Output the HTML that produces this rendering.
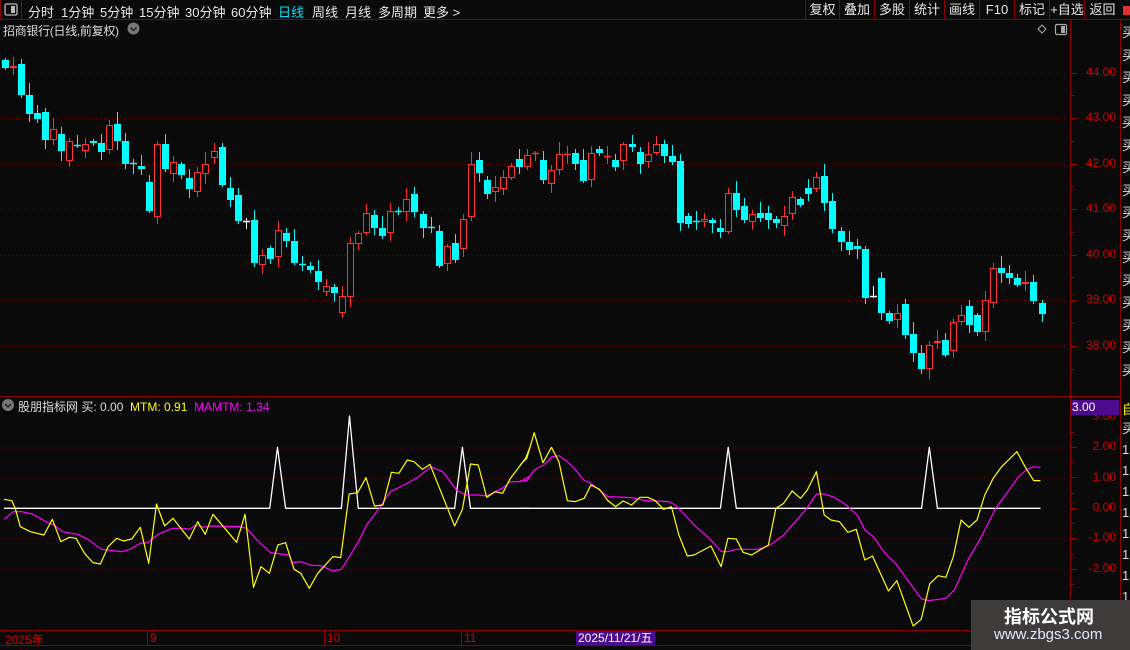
<!DOCTYPE html>
<html><head><meta charset="utf-8"><style>
*{margin:0;padding:0;box-sizing:border-box}
body{width:1130px;height:650px;background:#0a0a0a;overflow:hidden;position:relative;font-family:"Liberation Sans","Noto Sans CJK SC",sans-serif;color:#e6e6e6}
.a{position:absolute;white-space:nowrap}
.tb{font-size:13px;top:2px;color:#e8e8e8}
.rb{position:absolute;top:0;height:19px;font-size:13px;line-height:19px;text-align:center;color:#e8e8e8}
.pl{position:absolute;right:14px;font-size:12px;color:#d00000;font-family:"Liberation Sans",sans-serif}
.ax{position:absolute;font-size:12px;color:#d00000;top:631px}
</style></head><body>
<svg class="a" style="left:0;top:0" width="1130" height="650" xmlns="http://www.w3.org/2000/svg">
<g stroke="#8b0000" stroke-width="1" fill="none">
<line x1="0" y1="19.5" x2="1130" y2="19.5"/>
<line x1="21.5" y1="0" x2="21.5" y2="19"/>
<line x1="0.5" y1="0" x2="0.5" y2="19"/>
<line x1="1070.5" y1="19" x2="1070.5" y2="650"/>
<line x1="1120.5" y1="19" x2="1120.5" y2="650"/>
<line x1="0" y1="396.5" x2="1120" y2="396.5"/>
<line x1="0" y1="630.5" x2="1130" y2="630.5"/>
<line x1="0" y1="645.5" x2="1130" y2="645.5"/>
<line x1="805.5" y1="0" x2="805.5" y2="19"/><line x1="839.5" y1="0" x2="839.5" y2="19"/>
<line x1="874.5" y1="0" x2="874.5" y2="19"/><line x1="909.5" y1="0" x2="909.5" y2="19"/>
<line x1="944.5" y1="0" x2="944.5" y2="19"/><line x1="979.5" y1="0" x2="979.5" y2="19"/>
<line x1="1014.5" y1="0" x2="1014.5" y2="19"/><line x1="1049.5" y1="0" x2="1049.5" y2="19"/>
<line x1="1084.5" y1="0" x2="1084.5" y2="19"/>
<line x1="147.5" y1="631" x2="147.5" y2="645"/><line x1="324.5" y1="631" x2="324.5" y2="645"/>
<line x1="461.5" y1="631" x2="461.5" y2="645"/>
</g>
<rect x="1123" y="6" width="7" height="9" fill="#e03030"/>
<rect x="5" y="4" width="12" height="11" rx="1.5" fill="none" stroke="#bbb" stroke-width="1.3"/>
<rect x="11" y="6" width="4" height="7" fill="#bbb"/>
<circle cx="133.5" cy="28.5" r="6" fill="#777"/>
<path d="M130.5 27.5 L133.5 30.5 L136.5 27.5" stroke="#222" stroke-width="1.5" fill="none"/>
<path d="M1042 25 L1046 29 L1042 33 L1038 29 Z" stroke="#aaa" fill="none"/>
<rect x="1055.5" y="24.5" width="11" height="10" rx="1.5" fill="none" stroke="#aaa" stroke-width="1.2"/>
<rect x="1061" y="26" width="4" height="7" fill="#aaa"/>
<circle cx="8" cy="405" r="6" fill="#777"/>
<path d="M5 404 L8 407 L11 404" stroke="#222" stroke-width="1.5" fill="none"/>
<g id="grid" stroke="#6a0000" stroke-width="1" stroke-dasharray="1 3"></g>
<g id="ticks" stroke="#a00000"></g>
<g id="cd"></g>
<g transform="translate(0,410) scale(0.338,0.3333)" fill="none" stroke-linejoin="round">
<polyline vector-effect="non-scaling-stroke" stroke="#fff" stroke-width="1.3" points="12,295 798,295 821,112 845,295 1010,295 1034,18 1060,295 1345,295 1368,112 1392,295 1568,295"/>
<polyline vector-effect="non-scaling-stroke" stroke="#ff00ff" stroke-width="1.2" points="12,328 40,305 65,305 95,312 120,325 140,338 160,345 185,365 230,373 260,388 300,418 360,425 385,418 415,400 437,398 455,383 470,372 510,355 540,355 560,358 580,345 600,352 625,348 710,350 730,355 760,390 800,428 830,432 855,435 865,458 890,455 920,466 950,467 985,483 1010,478 1040,430 1060,395 1085,345 1120,298 1155,245 1195,225 1235,203 1275,170 1310,185 1350,240 1378,255 1415,255 1440,258 1465,245 1485,235 1510,215 1540,215 1568,198"/>
<polyline vector-effect="non-scaling-stroke" stroke="#ffff00" stroke-width="1.2" points="12,268 35,272 45,295 60,350 90,365 130,375 155,328 180,395 205,382 225,385 250,430 275,458 297,462 320,410 345,385 365,393 390,387 415,352 440,460 463,282 487,348 512,325 535,355 560,387 585,335 607,373 630,313 700,397 725,313 750,532 772,470 797,490 822,405 845,398 870,478 890,490 915,535 940,490 985,440 1008,443 1033,252 1058,248 1083,203 1108,288 1133,285 1158,187 1180,190 1205,150 1225,155 1250,178 1272,163 1345,348 1368,298 1392,162 1415,165 1440,262 1465,245 1487,250 1510,205 1555,145 1568,112"/>
</g>
<g transform="translate(520,410) scale(0.338,0.3333)" fill="none" stroke-linejoin="round">
<polyline vector-effect="non-scaling-stroke" stroke="#fff" stroke-width="1.3" points="0,295 593,295 616,112 640,295 1188,295 1211,112 1235,295 1540,295"/>
<polyline vector-effect="non-scaling-stroke" stroke="#ff00ff" stroke-width="1.2" points="0,213 20,212 42,180 70,165 95,140 115,137 140,155 165,180 188,210 210,220 235,240 260,260 330,263 372,272 440,275 460,285 490,318 520,350 560,385 596,425 615,425 640,418 705,418 740,405 780,375 810,340 845,300 877,252 900,252 930,262 965,285 1000,318 1020,360 1045,380 1080,430 1115,465 1150,515 1188,567 1210,572 1260,565 1285,540 1325,450 1365,380 1410,290 1440,250 1475,200 1500,178 1520,170 1540,172"/>
<polyline vector-effect="non-scaling-stroke" stroke="#ffff00" stroke-width="1.2" points="0,165 20,145 42,68 68,158 93,112 115,155 140,272 163,275 190,265 210,225 235,238 260,272 283,290 305,273 330,285 355,262 378,262 400,272 425,298 448,290 470,375 495,438 515,435 565,408 595,470 615,385 640,387 660,427 685,435 735,405 757,295 780,280 805,243 830,265 850,240 877,185 900,315 920,330 945,335 970,367 995,358 1020,450 1043,438 1090,543 1115,512 1163,648 1187,628 1212,522 1237,497 1260,502 1282,440 1305,330 1328,352 1352,330 1375,255 1400,205 1425,170 1470,125 1497,175 1520,212 1540,212"/>
</g>
</svg>

<div class="a tb" style="left:28px">分时</div>
<div class="a tb" style="left:61px">1分钟</div>
<div class="a tb" style="left:100px">5分钟</div>
<div class="a tb" style="left:139px">15分钟</div>
<div class="a tb" style="left:185px">30分钟</div>
<div class="a tb" style="left:231px">60分钟</div>
<div class="a tb" style="left:278px;color:#00e5ff">日线</div>
<div class="a tb" style="left:312px">周线</div>
<div class="a tb" style="left:345px">月线</div>
<div class="a tb" style="left:378px">多周期</div>
<div class="a tb" style="left:423px">更多 &gt;</div>
<div class="rb" style="left:806px;width:33px">复权</div>
<div class="rb" style="left:840px;width:34px">叠加</div>
<div class="rb" style="left:875px;width:34px">多股</div>
<div class="rb" style="left:910px;width:34px">统计</div>
<div class="rb" style="left:945px;width:34px">画线</div>
<div class="rb" style="left:980px;width:34px">F10</div>
<div class="rb" style="left:1015px;width:34px">标记</div>
<div class="rb" style="left:1050px;width:34px">+自选</div>
<div class="rb" style="left:1085px;width:35px">返回</div>

<div class="a" style="left:3px;top:22px;font-size:12px;letter-spacing:-0.3px;color:#ddd">招商银行(日线,前复权)</div>
<div class="a" style="left:18px;top:398px;font-size:12px;color:#ddd">股朋指标网 <span>买: 0.00</span> &nbsp;<span style="color:#ffff00">MTM: 0.91</span> &nbsp;<span style="color:#ff00ff">MAMTM: 1.34</span></div>

<div class="pl" style="top:65px">44.00</div>
<div class="pl" style="top:110px">43.00</div>
<div class="pl" style="top:156px">42.00</div>
<div class="pl" style="top:201px">41.00</div>
<div class="pl" style="top:247px">40.00</div>
<div class="pl" style="top:292px">39.00</div>
<div class="pl" style="top:338px">38.00</div>
<div class="pl" style="top:409px;clip-path:inset(5px 0 0 0)">3.00</div>
<div class="pl" style="top:439px">2.00</div>
<div class="pl" style="top:470px">1.00</div>
<div class="pl" style="top:500px">0.00</div>
<div class="pl" style="top:530px">-1.00</div>
<div class="pl" style="top:561px">-2.00</div>
<div class="a" style="left:1071px;top:400px;width:48px;height:15px;background:#4b0a90;color:#fff;font-size:12px;line-height:15px;padding-left:1px">3.00</div>

<div class="a" style="left:1122px;top:22px;font-size:13px;color:#ddd;line-height:22.5px;width:8px;overflow:hidden;height:370px">买<br>买<br>买<br>买<br>买<br>买<br>买<br>买<br>买<br>买<br>买<br>买<br>买<br>买<br>买<br>买</div>
<div class="a" style="left:1122px;top:399px;font-size:13px;color:#ff0;width:8px;overflow:hidden">自</div>
<div class="a" style="left:1122px;top:418px;font-size:13px;color:#ddd;line-height:21px;width:8px;overflow:hidden">买<br>1<br>1<br>1<br>1<br>1<br>1<br>1<br>1<br>1</div>

<div class="ax" style="left:5px">2025年</div>
<div class="ax" style="left:150px">9</div>
<div class="ax" style="left:327px">10</div>
<div class="ax" style="left:464px">11</div>
<div class="a" style="left:576px;top:631px;width:79px;height:14px;background:#4b0a90;color:#fff;font-size:12px;line-height:14px;padding-left:2px">2025/11/21/五</div>

<div class="a" style="left:971px;top:600px;width:159px;height:50px;background:#3e3b3b"></div>
<div class="a" style="left:1004px;top:603px;font-size:18px;font-weight:bold;color:#fff">指标公式网</div>
<div class="a" style="left:994px;top:626px;font-size:15px;color:#dfe8ff">www.zbgs3.com</div>

<script>
var NS="http://www.w3.org/2000/svg";
function el(p,t,a){var e=document.createElementNS(NS,t);for(var k in a)e.setAttribute(k,a[k]);p.appendChild(e);return e;}
var g=document.getElementById('grid');
[73,118,164,209,255,300,346,447.5,477.5,538.5,569.5].forEach(function(y){el(g,'line',{x1:0,x2:1068,y1:y+0.5,y2:y+0.5});});
var t=document.getElementById('ticks');
[73,118,164,209,255,300,346,447,477,508,538,569].forEach(function(y){el(t,'line',{x1:1070,x2:1077,y1:y+0.5,y2:y+0.5});});
[95,141,186,232,277,323,369,432,462,493,523,554,584].forEach(function(y){el(t,'line',{x1:1070,x2:1074,y1:y+0.5,y2:y+0.5});});
var D=[[60,68,'c'],[66,68,'r'],[64,95,'c'],[95,114,'c'],[113,119,'c'],[112,140,'c'],[129,140,'r'],[134,151,'c'],[141,161,'r'],[145,146,'c'],[144,151,'r'],[141,143,'c'],[143,152,'c'],[125,150,'r'],[124,141,'c'],[141,164,'c'],[163,164,'c'],[166,169,'c'],[182,211,'c'],[144,217,'r'],[144,169,'c'],[162,174,'r'],[164,175,'c'],[178,189,'c'],[172,192,'r'],[164,174,'r'],[151,158,'r'],[147,185,'c'],[188,200,'c'],[195,221,'c'],[221,221,'w'],[220,263,'c'],[255,265,'r'],[248,259,'c'],[230,257,'r'],[233,241,'c'],[241,263,'c'],[264,264,'c'],[266,270,'c'],[271,282,'c'],[286,292,'r'],[287,293,'c'],[296,313,'r'],[243,297,'r'],[233,244,'r'],
[213,233,'r'],[215,228,'c'],[228,236,'c'],[211,233,'r'],[211,211,'c'],[199,212,'r'],[194,212,'c'],[214,228,'c'],[227,227,'c'],[231,266,'c'],[246,264,'r'],[243,260,'c'],[219,249,'r'],[164,217,'r'],[160,173,'c'],[180,194,'c'],[187,192,'r'],[177,189,'r'],[166,178,'r'],[159,167,'c'],[155,167,'r'],[153,153,'r'],[160,180,'c'],[170,184,'r'],[154,170,'r'],[154,154,'r'],[153,164,'c'],[160,181,'c'],[153,180,'r'],[149,153,'c'],[156,156,'r'],[160,167,'c'],[144,161,'r'],[144,147,'c'],[152,164,'c'],[154,162,'r'],[144,153,'r'],[144,156,'c'],[156,162,'c'],[161,223,'c'],[216,224,'c'],[221,221,'c'],
[219,222,'r'],[220,223,'c'],[228,232,'c'],[193,232,'r'],[193,210,'c'],[206,220,'c'],[214,222,'r'],[213,218,'c'],[213,220,'c'],[219,223,'c'],[216,226,'r'],[197,214,'r'],[199,205,'c'],[188,194,'c'],[177,189,'r'],[176,203,'c'],[201,229,'c'],[231,242,'c'],[242,250,'c'],[246,249,'c'],[249,298,'c'],[296,296,'w'],[278,313,'c'],[313,321,'c'],[313,320,'r'],[304,335,'c'],[334,353,'c'],[353,369,'c'],[345,369,'r'],[341,343,'r'],[340,355,'c'],[322,351,'r'],[315,322,'r'],[306,325,'c'],[315,332,'c'],[300,332,'r'],[268,303,'r'],[268,273,'c'],[273,278,'c'],[278,285,'c'],[282,284,'r'],[282,301,'c'],[303,314,'c']];
var cd=document.getElementById('cd');var n=D.length;
D.forEach(function(d,i){
 var x=Math.round(4.5+i*(1037/(n-1)))+0.5;
 var col=d[2]=='c'?'#00ffff':(d[2]=='r'?'#ff3232':'#ffffff');
 var hi=d[0]-(2+(i*7)%11), lo=d[1]+(2+(i*5)%9);
 el(cd,'line',{x1:x,x2:x,y1:hi,y2:lo,stroke:col,'stroke-width':1});
 var h=d[1]-d[0];
 if(h<2){el(cd,'line',{x1:x-3.5,x2:x+3.5,y1:d[0]+0.5,y2:d[0]+0.5,stroke:col,'stroke-width':1.5});}
 else if(d[2]=='r'){el(cd,'rect',{x:x-3,y:d[0]+0.5,width:6,height:h-1,fill:'#0a0a0a',stroke:col,'stroke-width':1});}
 else{el(cd,'rect',{x:x-3.5,y:d[0],width:7,height:h,fill:col});}
});
</script>
</body></html>
